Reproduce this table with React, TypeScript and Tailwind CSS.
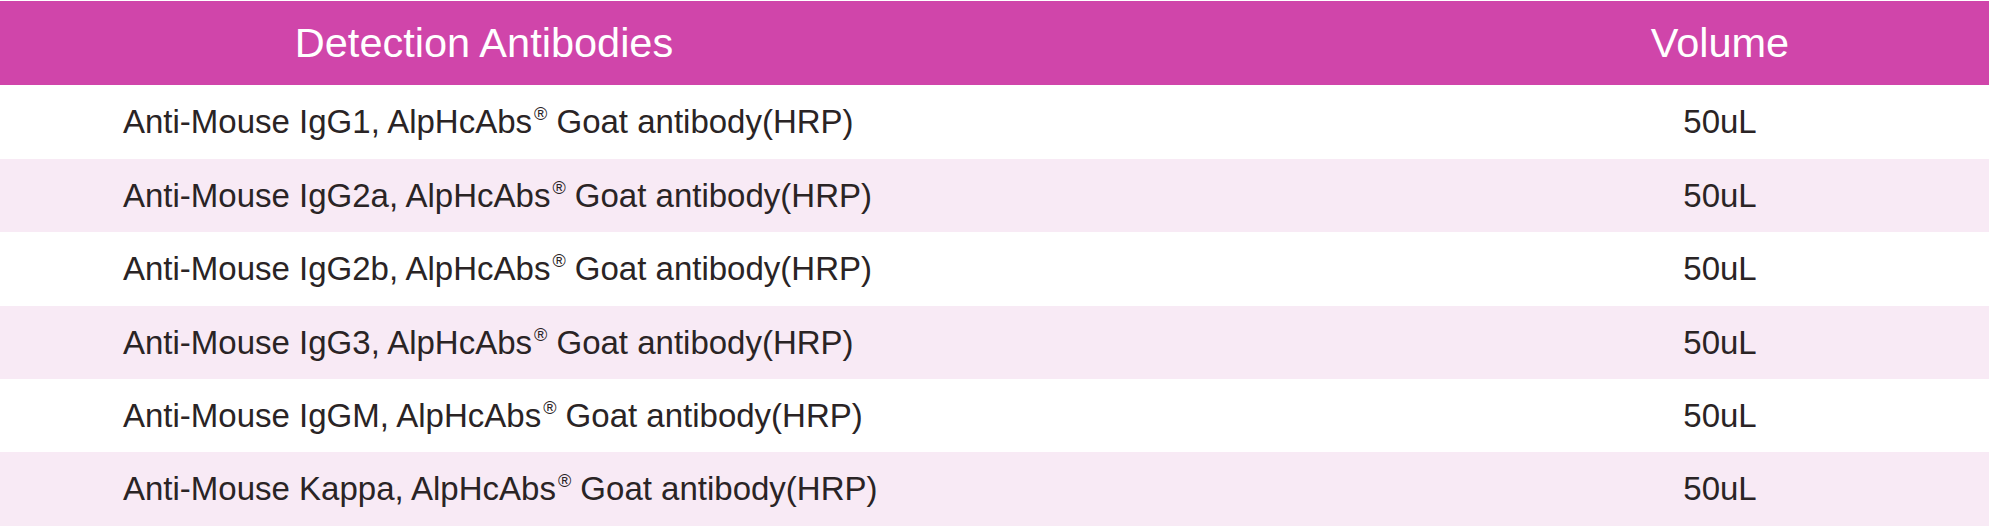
const rows = [
  { clone: "IgG1", volume: "50uL" },
  { clone: "IgG2a", volume: "50uL" },
  { clone: "IgG2b", volume: "50uL" },
  { clone: "IgG3", volume: "50uL" },
  { clone: "IgGM", volume: "50uL" },
  { clone: "Kappa", volume: "50uL" },
];

const heights = ["h-[74px]", "h-[73px]", "h-[74px]", "h-[73px]", "h-[73px]", "h-[74px]"];

export default function App() {
  return (
    <div className="w-[1989px] h-[527px] bg-white font-['Liberation_Sans',Arial,sans-serif] pt-px">
      <div className="flex h-[84px] items-center bg-[#d045aa] text-white text-[41.5px]">
        <div className="w-[968px] text-center">Detection Antibodies</div>
        <div className="w-[483px]" />
        <div className="flex-1 text-center">Volume</div>
      </div>
      {rows.map((row, i) => (
        <div
          key={row.clone}
          className={`flex items-center text-[33px] text-[#2a2425] ${heights[i]} ${
            i % 2 === 1 ? "bg-[#f8eaf5]" : "bg-white"
          }`}
        >
          <div className="w-[1451px] pl-[123px]">
            Anti-Mouse {row.clone}, AlpHcAbs
            <sup className="text-[18px] relative -top-[13px] ml-[2px]">®</sup> Goat antibody(HRP)
          </div>
          <div className="flex-1 text-center">{row.volume}</div>
        </div>
      ))}
    </div>
  );
}
